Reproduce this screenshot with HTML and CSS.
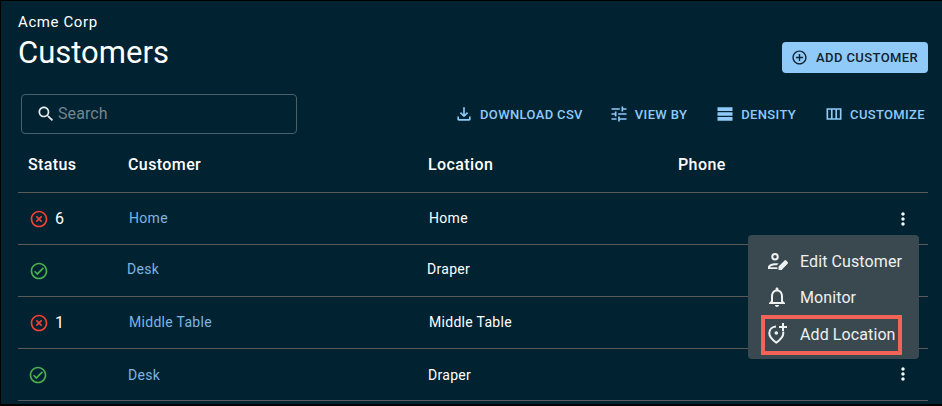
FILE: index.html
```html
<!DOCTYPE html>
<html lang="en">
  <head>
    <meta charset="UTF-8" />
    <title>Customers</title>
    <link rel="stylesheet" href="styles.css">
  </head>
  <body>
    <main class="page">
      <header class="page-head">
        <div>
          <p class="org-name">Acme Corp</p>
          <h1>Customers</h1>
        </div>
        <button class="add-btn">
          <svg class="icon" viewBox="0 0 24 24"><path d="M13 7h-2v4H7v2h4v4h2v-4h4v-2h-4V7zm-1-5C6.48 2 2 6.48 2 12s4.48 10 10 10 10-4.48 10-10S17.52 2 12 2zm0 18c-4.41 0-8-3.59-8-8s3.59-8 8-8 8 3.59 8 8-3.59 8-8 8z"/></svg>
          Add Customer
        </button>
      </header>

      <div class="toolbar">
        <label class="search">
          <svg class="search-icon" viewBox="0 0 24 24"><path d="M15.5 14h-.79l-.28-.27C15.41 12.59 16 11.11 16 9.5 16 5.91 13.09 3 9.5 3S3 5.91 3 9.5 5.91 16 9.5 16c1.61 0 3.09-.59 4.23-1.57l.27.28v.79l5 4.99L20.49 19l-4.99-5zm-6 0C7.01 14 5 11.99 5 9.5S7.01 5 9.5 5 14 7.01 14 9.5 11.99 14 9.5 14z"/></svg>
          <span class="search-text">Search</span>
        </label>
        <div class="tools">
          <span class="tool">
            <svg class="icon" viewBox="0 0 24 24"><path d="M18 15v3H6v-3H4v3c0 1.1.9 2 2 2h12c1.1 0 2-.9 2-2v-3h-2zm-1-4-1.41-1.41L13 12.17V4h-2v8.17L8.41 9.59 7 11l5 5 5-5z"/></svg>
            Download CSV
          </span>
          <span class="tool tool-view">
            <svg class="icon" viewBox="0 0 24 24"><path d="M3 17v2h6v-2H3zM3 5v2h10V5H3zm10 16v-2h8v-2h-8v-2h-2v6h2zM7 9v2H3v2h4v2h2V9H7zm14 4v-2H11v2h10zm-6-4h2V7h4V5h-4V3h-2v6z"/></svg>
            View by
          </span>
          <span class="tool tool-density">
            <svg class="icon" viewBox="0 0 24 24"><path d="M3 4h18v4.300H3zM3 9.900h18v4.200H3zM3 15.700h18V20H3z"/></svg>
            Density
          </span>
          <span class="tool tool-customize">
            <svg class="icon" viewBox="0 0 24 24"><path d="M3 5v14h18V5H3zm5.33 12H5V7h3.33v10zm5.34 0h-3.33V7h3.33v10zM19 17h-3.330V7H19v10z"/></svg>
            Customize
          </span>
        </div>
      </div>

      <div class="table">
        <div class="row head-row">
          <span>Status</span>
          <span>Customer</span>
          <span>Location</span>
          <span>Phone</span>
        </div>

        <div class="row">
          <span class="status"><svg class="status-icon err" viewBox="0 0 24 24"><use href="#icon-err"/></svg>6</span>
          <a class="link shift-1 lift-1">Home</a>
          <span class="shift-1 lift-1">Home</span>
          <span></span>
          <svg class="more more-1" viewBox="0 0 24 24"><use href="#icon-more"/></svg>
        </div>
        <div class="row">
          <span class="status"><svg class="status-icon ok" viewBox="0 0 24 24"><use href="#icon-ok"/></svg></span>
          <a class="link shift-n1 lift-2">Desk</a>
          <span class="shift-n1 lift-2">Draper</span>
          <span></span>
        </div>
        <div class="row">
          <span class="status"><svg class="status-icon err" viewBox="0 0 24 24"><use href="#icon-err"/></svg>1</span>
          <a class="link shift-1 lift-1">Middle Table</a>
          <span class="shift-1 lift-1">Middle Table</span>
          <span></span>
        </div>
        <div class="row">
          <span class="status shift-n1"><svg class="status-icon ok" viewBox="0 0 24 24"><use href="#icon-ok"/></svg></span>
          <a class="link">Desk</a>
          <span>Draper</span>
          <span></span>
          <svg class="more more-4" viewBox="0 0 24 24"><use href="#icon-more"/></svg>
        </div>
      </div>

      <ul class="menu">
        <li class="menu-item">
          <svg class="menu-icon" viewBox="0 0 24 24"><path d="M10 11.500a3.750 3.750 0 1 0 0-7.500 3.750 3.750 0 0 0 0 7.500zm0-5.500a1.750 1.750 0 1 1 0 3.500 1.750 1.750 0 0 1 0-3.500zM5 18.200c.2-.8 2.700-2 5-2h1.800l1.900-1.800c-1.300-.2-2.600-.2-3.700-.2-2.600 0-7 1.300-7 3.800v2h9.500l-.2-1.800H5z"/><path d="M13.500 21v-3.400l6-6c.5-.5 1.300-.5 1.800 0l1.300 1.300c.5.5.5 1.300 0 1.800l-6 6.300h-3.100z"/></svg>
          Edit Customer
        </li>
        <li class="menu-item">
          <svg class="menu-icon" viewBox="0 0 24 24"><path d="M12 22c1.100 0 2-.9 2-2h-4c0 1.100.9 2 2 2zm6-6v-5c0-3.070-1.630-5.640-4.500-6.320V4c0-.83-.67-1.500-1.500-1.500s-1.500.67-1.500 1.500v.68C7.640 5.360 6 7.920 6 11v5l-2 2v1h16v-1l-2-2zm-2 1H8v-6c0-2.480 1.510-4.500 4-4.500s4 2.020 4 4.500v6z"/></svg>
          Monitor
        </li>
        <li class="menu-item menu-item-marked">
          <svg class="menu-icon" viewBox="0 0 24 24">
            <path class="pin" d="M11 4.500C7.200 4.700 4.300 7.500 4.300 11.300c0 3.300 2.600 6.300 7 9.300 4.400-3 7-6 7-9.300 0-.6-.1-1.200-.2-1.700"/>
            <circle cx="11.300" cy="11" r="1.800"/>
            <path d="M17 1h2v3h3v2h-3v3h-2V6h-3V4h3z"/>
          </svg>
          Add Location
        </li>
      </ul>
    </main>

    <svg class="defs" aria-hidden="true">
      <symbol id="icon-err" viewBox="0 0 24 24"><path d="M14.590 8 12 10.590 9.410 8 8 9.410 10.590 12 8 14.590 9.410 16 12 13.410 14.590 16 16 14.590 13.410 12 16 9.410 14.590 8zM12 2C6.470 2 2 6.470 2 12s4.470 10 10 10 10-4.470 10-10S17.530 2 12 2zm0 18c-4.410 0-8-3.590-8-8s3.590-8 8-8 8 3.590 8 8-3.590 8-8 8z"/></symbol>
      <symbol id="icon-ok" viewBox="0 0 24 24"><path d="M12 2C6.480 2 2 6.480 2 12s4.480 10 10 10 10-4.480 10-10S17.520 2 12 2zm0 18c-4.410 0-8-3.590-8-8s3.590-8 8-8 8 3.590 8 8-3.590 8-8 8zm4.590-12.420L10 14.170l-2.590-2.580L6 13l4 4 8-8-1.410-1.420z"/></symbol>
      <symbol id="icon-more" viewBox="0 0 24 24"><path d="M12 8c1.100 0 2-.9 2-2s-.9-2-2-2-2 .9-2 2 .9 2 2 2zm0 2c-1.100 0-2 .9-2 2s.9 2 2 2 2-.9 2-2-.9-2-2-2zm0 6c-1.100 0-2 .9-2 2s.9 2 2 2 2-.9 2-2-.9-2-2-2z"/></symbol>
    </svg>
  </body>
</html>
```

FILE: styles.css
```css
/* Base */
* {
  margin: 0;
  padding: 0;
  box-sizing: border-box;
}

:root {
  --navy: #012231;
  --white: #ffffff;
  --sky: #90caf9;
  --link: #7cb5e3;
  --line: #5a5a58;
  --menu-bg: #3a494f;
  --marker: #f26457;
}

body {
  background-color: #000000;
  color: var(--white);
  font-family: Roboto, sans-serif;
  height: 406px;
  overflow: hidden;
  padding: 1px 0 2px 1px;
}

.page {
  position: relative;
  height: 403px;
  background-color: var(--navy);
  padding: 12px 14px 0 17px;
}

/* Title area */
.page-head {
  display: flex;
  justify-content: space-between;
  align-items: flex-start;
}

.org-name {
  font-size: 15px;
  line-height: 18px;
  letter-spacing: 0.6px;
}

h1 {
  font-size: 31px;
  font-weight: 400;
  line-height: 36px;
  margin-top: 4px;
}

.add-btn {
  display: flex;
  align-items: center;
  gap: 8px;
  width: 146px;
  height: 31px;
  margin-top: 29px;
  padding-left: 9px;
  border: none;
  border-radius: 4px;
  background-color: var(--sky);
  color: #10222e;
  font-family: Roboto, sans-serif;
  font-size: 13px;
  font-weight: 500;
  letter-spacing: 0.4px;
  text-transform: uppercase;
}

.add-btn .icon {
  width: 17px;
  height: 17px;
  fill: #10222e;
}

/* Toolbar */
.toolbar {
  display: flex;
  justify-content: space-between;
  align-items: center;
  margin-top: 21px;
  margin-left: 3px;
}

.search {
  display: flex;
  align-items: center;
  gap: 2px;
  width: 276px;
  height: 40px;
  padding-left: 14px;
  border: 1px solid #47606c;
  border-radius: 4px;
  color: #71858f;
  font-size: 16px;
  letter-spacing: 0.1px;
}

.search-text {
  margin-bottom: 2px;
}

.search-icon {
  width: 20px;
  height: 20px;
  fill: #e6ebee;
}

.tools {
  display: flex;
  align-items: center;
  margin-right: 3px;
  color: var(--sky);
  font-size: 13px;
  font-weight: 500;
  letter-spacing: 0.35px;
  text-transform: uppercase;
}

.tool {
  display: flex;
  align-items: center;
  gap: 6px;
}

.tool .icon {
  width: 20px;
  height: 20px;
  fill: var(--sky);
}

.tool-view {
  margin-left: 26px;
}

.tool-density {
  margin-left: 28px;
}

.tool-customize {
  margin-left: 28px;
}

/* Table */
.table {
  margin-top: 7px;
}

.row {
  position: relative;
  display: grid;
  grid-template-columns: 100px 300px 250px 1fr;
  align-items: center;
  height: 52px;
  padding-left: 10px;
  border-bottom: 1px solid var(--line);
  font-size: 14px;
  letter-spacing: 0.3px;
}

.head-row {
  font-size: 16px;
  font-weight: 500;
  letter-spacing: 0.4px;
  height: 52px;
  padding-bottom: 4px;
}

.status {
  display: flex;
  align-items: center;
  gap: 6px;
  font-size: 16px;
}

.status-icon {
  width: 20px;
  height: 20px;
  margin-left: 1px;
}

.err {
  fill: #f44336;
}

.ok {
  fill: #4caf50;
}

.link {
  color: var(--link);
}

.shift-1 {
  margin-left: 1px;
}

.shift-n1 {
  margin-left: -1px;
}

.lift-1 {
  margin-bottom: 2px;
}

.lift-2 {
  margin-bottom: 4px;
}

.more {
  position: absolute;
  width: 20px;
  height: 20px;
  fill: var(--white);
}

.more-1 {
  top: 16px;
  left: 875px;
}

.more-4 {
  top: 15px;
  left: 875px;
}

.defs {
  display: none;
}

/* Row menu */
.menu {
  position: absolute;
  top: 234px;
  left: 747px;
  width: 171px;
  height: 124px;
  padding: 8px 13px 0;
  border-radius: 4px;
  background-color: var(--menu-bg);
  list-style: none;
  font-size: 16px;
  letter-spacing: 0.1px;
}

.menu-item {
  display: flex;
  align-items: center;
  gap: 11px;
  height: 36px;
  padding-left: 4px;
  color: #eef1f2;
}

.menu-item-marked {
  height: 40px;
  margin-right: 4px;
  padding-bottom: 2px;
  outline: 4px solid var(--marker);
  outline-offset: -4px;
}

.menu-icon {
  width: 24px;
  height: 24px;
  flex: none;
  fill: #eef1f2;
}

.menu-icon .pin {
  fill: none;
  stroke: #eef1f2;
  stroke-width: 2;
}
```
